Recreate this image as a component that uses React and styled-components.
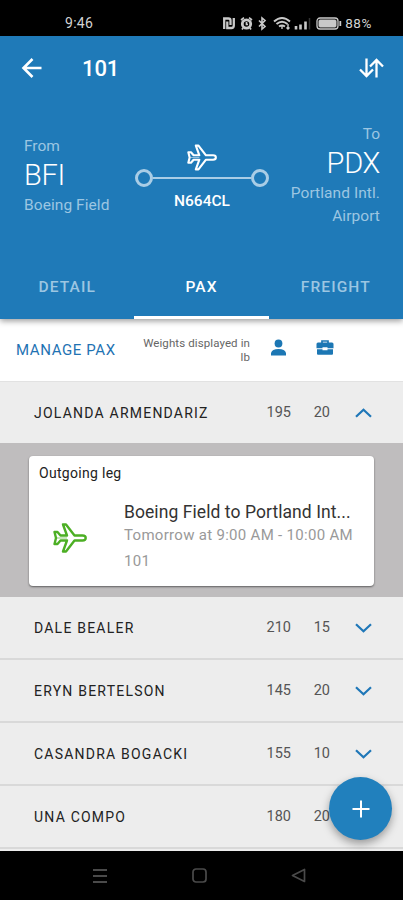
import React, { useState } from "react";
import styled, { createGlobalStyle } from "styled-components";

const GlobalStyle = createGlobalStyle`
  * {
    box-sizing: border-box;
  }
  body {
    margin: 0;
    background-color: #000;
    font-family: Roboto, "Liberation Sans", sans-serif;
  }
  button {
    font-family: inherit;
    border: 0;
    padding: 0;
    background: none;
    cursor: pointer;
  }
  svg {
    display: block;
    flex: none;
  }
`;

const Screen = styled.div`
  position: relative;
  display: flex;
  flex-direction: column;
  width: 403px;
  height: 900px;
  overflow: hidden;
`;

const StatusBar = styled.div`
  display: flex;
  justify-content: space-between;
  height: 36px;
  padding: 16px 31px 0 65px;
  background-color: #000;
  color: #d4d4d4;
  font-size: 13.5px;
  line-height: 15px;
`;
const Time = styled.span`
  font-size: 14px;
  letter-spacing: 0.3px;
`;
const StatusIcons = styled.div`
  display: flex;
  align-items: flex-start;
`;
const Battery = styled.span`
  letter-spacing: 0.6px;
  margin-left: 3px;
`;

const Header = styled.header`
  position: relative;
  z-index: 1;
  flex: none;
  height: 283px;
  background-color: #1f7ab8;
  box-shadow: 0 2px 6px rgba(0, 0, 0, 0.4);
  color: #fff;
`;
const TitleBar = styled.div`
  display: flex;
  align-items: center;
  height: 64px;
  padding: 0 19px 0 20px;
`;
const Title = styled.h1`
  flex: 1;
  margin: 0 0 0 38px;
  font-size: 22px;
  font-weight: 500;
  letter-spacing: -0.1px;
`;
const Route = styled.div`
  display: flex;
  justify-content: space-between;
  height: 155px;
  padding: 0 23px 0 24px;
`;
const Place = styled.div`
  width: 100px;
  padding-top: ${(props) => (props.right ? "22px" : "34px")};
  text-align: ${(props) => (props.right ? "right" : "left")};
`;
const PlaceLabel = styled.div`
  font-size: 15.5px;
  line-height: 24px;
  color: #9cc6e2;
`;
const PlaceCode = styled.div`
  height: 36px;
  font-size: 29px;
  line-height: 34px;
  font-weight: 300;
  letter-spacing: -0.3px;
`;
const PlaceName = styled.div`
  font-size: 15.5px;
  line-height: 23px;
  color: #9cc6e2;
  letter-spacing: 0.07px;
`;
const Flight = styled.div`
  width: 136px;
  padding-top: 44px;
  display: flex;
  flex-direction: column;
  align-items: center;
`;
const Track = styled.div`
  display: flex;
  align-items: center;
  margin-top: -2px;
`;
const Stop = styled.span`
  width: 18px;
  height: 18px;
  border: 3px solid #a9cde6;
  border-radius: 50%;
`;
const Line = styled.span`
  width: 98px;
  height: 2px;
  background-color: #a9cde6;
`;
const TailNumber = styled.div`
  margin-top: 4px;
  font-size: 15.5px;
  line-height: 20px;
  font-weight: 500;
`;

const Tabs = styled.nav`
  display: flex;
  height: 64px;
`;
const Tab = styled.button`
  flex: 1;
  padding-top: 3px;
  padding-bottom: ${(props) => (props.active ? "0" : "3px")};
  border-bottom: ${(props) => (props.active ? "3px solid #fff" : "0")};
  color: ${(props) => (props.active ? "#ffffff" : "#9cc6e2")};
  font-size: 15.5px;
  font-weight: 500;
  letter-spacing: 1.1px;
`;

const Toolbar = styled.div`
  display: flex;
  flex: none;
  height: 63px;
  padding: 0 69px 0 16px;
  background-color: #fff;
  border-bottom: 1px solid #e2e2e2;
`;
const ManageButton = styled.button`
  align-self: flex-start;
  width: 119px;
  margin-top: 21px;
  text-align: left;
  white-space: nowrap;
  color: #1f73b3;
  font-size: 15px;
  line-height: 20px;
  letter-spacing: 0.6px;
`;
const Units = styled.div`
  width: 115px;
  margin-top: 17px;
  text-align: right;
  color: #666;
  font-size: 11.5px;
  line-height: 14px;
  letter-spacing: 0.1px;
`;
const ToolbarIcons = styled.div`
  display: flex;
  gap: 29px;
  margin: 20px 0 0 20px;
`;

const List = styled.div`
  flex: 1;
  overflow: hidden;
  background-color: #ededed;
`;
const Row = styled.div`
  display: flex;
  align-items: center;
  height: ${(props) => (props.open ? "61px" : "63px")};
  padding: 0 31px 0 34px;
  border-bottom: ${(props) => (props.open ? "0" : "2px solid #d9d9d9")};
  cursor: pointer;
`;
const Name = styled.span`
  flex: 1;
  color: #222;
  font-size: 14px;
  line-height: 18px;
  letter-spacing: 1.22px;
`;
const Weight = styled.span`
  width: ${(props) => props.width};
  text-align: right;
  color: #555;
  font-size: 14.5px;
`;
const Chevron = styled.svg`
  margin-left: 25px;
  transform: ${(props) => (props.$open ? "rotate(180deg)" : "none")};
`;

const Legs = styled.div`
  height: 154px;
  padding: 13px 29px 0;
  background-color: #bfbdbe;
`;
const LegCard = styled.div`
  height: 130px;
  padding: 7px 10px;
  background-color: #fff;
  border-radius: 4px;
  box-shadow: 0 1px 2px rgba(0, 0, 0, 0.5);
`;
const LegHeading = styled.div`
  color: #222;
  font-size: 14px;
  line-height: 20px;
  letter-spacing: 0.3px;
`;
const LegBody = styled.div`
  display: flex;
  margin-top: 18px;
`;
const LegIcon = styled.div`
  width: 85px;
  padding: 22px 0 0 13px;
`;
const LegRoute = styled.div`
  white-space: nowrap;
  color: #333;
  font-size: 17.5px;
  line-height: 23px;
  letter-spacing: 0.07px;
`;
const LegDetail = styled.div`
  height: ${(props) => props.height};
  white-space: nowrap;
  color: #999;
  font-size: 15px;
  line-height: 22px;
  letter-spacing: 0.3px;
`;

const AddButton = styled.button`
  position: absolute;
  left: 329px;
  top: 777px;
  display: flex;
  align-items: center;
  justify-content: center;
  width: 63px;
  height: 63px;
  border-radius: 50%;
  background-color: #2180bd;
  box-shadow: 0 4px 8px rgba(0, 0, 0, 0.35);
`;

const NavBar = styled.div`
  display: flex;
  flex: none;
  align-items: center;
  justify-content: space-between;
  height: 49px;
  padding: 0 97px 0 92px;
  background-color: #000;
`;

const Plane = ({ color, width, height }) => (
  <svg width={width} height={height} viewBox="0 0 34 30" fill="none" stroke={color} strokeWidth="2.4" strokeLinejoin="round">
    <path d="M1.5 9H4.5L7.5 12.5H14L10 1.5H13L21.5 12.5H29.5C31.5 12.5 32.7 13.7 32.7 15S31.5 17.5 29.5 17.5H21.5L13 28.5H10L14 17.5H7.5L4.5 21H1.5L3 15Z" />
    <path d="M4 15H14" strokeWidth="1.2" opacity="0.5" />
  </svg>
);

const passengers = [
  { name: "JOLANDA ARMENDARIZ", weight: 195, bags: 20 },
  { name: "DALE BEALER", weight: 210, bags: 15 },
  { name: "ERYN BERTELSON", weight: 145, bags: 20 },
  { name: "CASANDRA BOGACKI", weight: 155, bags: 10 },
  { name: "UNA COMPO", weight: 180, bags: 20 },
];

const App = () => {
  const [tab, setTab] = useState("PAX");
  const [openRow, setOpenRow] = useState("JOLANDA ARMENDARIZ");

  const handleRow = (name) => {
    setOpenRow(openRow === name ? null : name);
  };

  return (
    <Screen>
      <GlobalStyle />
      <StatusBar>
        <Time>9:46</Time>
        <StatusIcons>
          <svg width="119" height="15" viewBox="0 0 119 15" fill="none" stroke="#c9c9c9">
            {/* nfc */}
            <path d="M1.2 13V2.5H5.5Q7.5 2.5 7.5 4.5V9M4.3 5.5V12H8.5Q10.8 12 10.8 9.5V2" strokeWidth="2.3" />
            {/* alarm */}
            <circle cx="23.5" cy="8" r="4.2" strokeWidth="2.8" />
            <path d="M18 4L21 1.7M26 1.7L29 4M20 12L19 13.5M27 12L28 13.5M23.5 6V8.5H25" strokeWidth="1.7" />
            {/* bluetooth */}
            <path d="M36 4.5L42 10.5L39 13V2L42 4.5L36 10.5" strokeWidth="1.6" />
            {/* wifi */}
            <path d="M51 5.5Q59 -1.5 67 5.5M53.5 8Q59 3.5 64.5 8M56 10.5Q59 8.5 62 10.5" strokeWidth="2" />
            <path d="M59 10V13M65 8V13M63.5 11.5L65 13L66.5 11.5" strokeWidth="1.4" />
            {/* signal */}
            <path d="M73 10V13.5M77.5 8.5V13.5M82.5 5.5V13.5" strokeWidth="2.6" />
            <path d="M86.5 2V13.5" stroke="#333" strokeWidth="1.5" />
            {/* battery */}
            <rect x="94" y="2" width="21" height="11" rx="3" strokeWidth="1.3" />
            <rect x="96" y="4" width="17" height="7" rx="1" fill="#c9c9c9" />
            <path d="M117.3 5V10" strokeWidth="1.8" />
          </svg>
          <Battery>88%</Battery>
        </StatusIcons>
      </StatusBar>

      <Header>
        <TitleBar>
          <svg width="24" height="24" viewBox="0 0 24 24" fill="none" stroke="#fff" strokeWidth="2.6">
            <path d="M21.5 12H3.5M12.5 3L3.5 12L12.5 21" />
          </svg>
          <Title>101</Title>
          <svg width="26" height="24" viewBox="0 0 26 24" fill="none" stroke="#fff" strokeWidth="2.3">
            <path d="M8.5 2.5V20M2 13.5L8.5 20L15 13.5M18.5 21.5V4M12 10.5L18.5 4L25 10.5" />
          </svg>
        </TitleBar>
        <Route>
          <Place>
            <PlaceLabel>From</PlaceLabel>
            <PlaceCode>BFI</PlaceCode>
            <PlaceName>Boeing Field</PlaceName>
          </Place>
          <Flight>
            <Plane color="#fff" width="30" height="27" />
            <Track>
              <Stop />
              <Line />
              <Stop />
            </Track>
            <TailNumber>N664CL</TailNumber>
          </Flight>
          <Place right>
            <PlaceLabel>To</PlaceLabel>
            <PlaceCode>PDX</PlaceCode>
            <PlaceName>Portland Intl. Airport</PlaceName>
          </Place>
        </Route>
        <Tabs>
          {["DETAIL", "PAX", "FREIGHT"].map((label) => (
            <Tab key={label} active={tab === label} onClick={() => setTab(label)}>
              {label}
            </Tab>
          ))}
        </Tabs>
      </Header>

      <Toolbar>
        <ManageButton>MANAGE PAX</ManageButton>
        <Units>Weights displayed in lb</Units>
        <ToolbarIcons>
          <svg width="17" height="17" viewBox="0 0 17 17" fill="#1c77b4">
            <circle cx="8.5" cy="4.5" r="3.9" />
            <path d="M1 16.5V14Q2 10 8.5 10T16 14V16.5Z" />
          </svg>
          <svg width="18" height="17" viewBox="0 0 18 17" fill="#1c77b4">
            <path d="M6 4V2H12V4" fill="none" stroke="#1c77b4" strokeWidth="1.7" />
            <path d="M2 3.5H16Q17.5 3.5 17.5 5V9.3H11.5V8.3H6.5V9.3H.5V5Q.5 3.5 2 3.5Z" />
            <path d="M1 10.3H6.5V11.3H11.5V10.3H17V14.8Q17 15.8 16 15.8H2Q1 15.8 1 14.8Z" />
          </svg>
        </ToolbarIcons>
      </Toolbar>

      <List>
        {passengers.map((pax) => {
          const open = openRow === pax.name;
          return (
            <React.Fragment key={pax.name}>
              <Row open={open} onClick={() => handleRow(pax.name)}>
                <Name>{pax.name}</Name>
                <Weight width="40px">{pax.weight}</Weight>
                <Weight width="39px">{pax.bags}</Weight>
                <Chevron $open={open} width="17" height="10" viewBox="0 0 17 10" fill="none" stroke="#1f77b8" strokeWidth="2.2">
                  <path d="M1 1.2L8.5 8.3L16 1.2" />
                </Chevron>
              </Row>
              {open && (
                <Legs>
                  <LegCard>
                    <LegHeading>Outgoing leg</LegHeading>
                    <LegBody>
                      <LegIcon>
                        <Plane color="#4caf24" width="36" height="30" />
                      </LegIcon>
                      <div>
                        <LegRoute>Boeing Field to Portland Int...</LegRoute>
                        <LegDetail height="26px">Tomorrow at 9:00 AM - 10:00 AM</LegDetail>
                        <LegDetail height="22px">101</LegDetail>
                      </div>
                    </LegBody>
                  </LegCard>
                </Legs>
              )}
            </React.Fragment>
          );
        })}
      </List>

      <AddButton aria-label="Add">
        <svg width="18" height="18" viewBox="0 0 18 18" stroke="#fff" strokeWidth="2">
          <path d="M9 0.5V17.5M0.5 9H17.5" />
        </svg>
      </AddButton>

      <NavBar>
        <svg width="16" height="16" viewBox="0 0 16 16" stroke="#4a4a4a" strokeWidth="2">
          <path d="M1 2H15M1 8H15M1 14H15" />
        </svg>
        <svg width="15" height="15" viewBox="0 0 15 15" fill="none" stroke="#4a4a4a" strokeWidth="1.7">
          <rect x="1" y="1" width="13" height="13" rx="3" />
        </svg>
        <svg width="15" height="15" viewBox="0 0 15 15" fill="none" stroke="#4a4a4a" strokeWidth="1.7" strokeLinejoin="round">
          <path d="M13.5 1.5V13.5L1.5 7.5Z" />
        </svg>
      </NavBar>
    </Screen>
  );
};

export default App;
